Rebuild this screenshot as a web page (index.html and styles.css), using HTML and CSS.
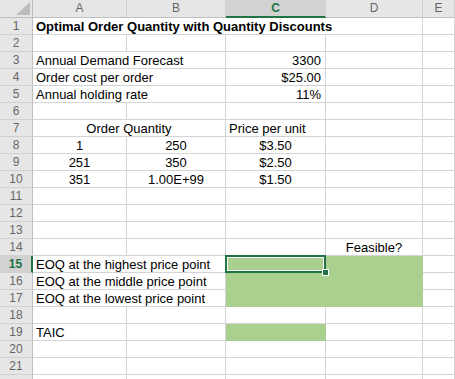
FILE: index.html
```html
<!DOCTYPE html>
<html lang="en">
<head>
    <meta charset="UTF-8">
    <title>Optimal Order Quantity</title>
    <link rel="stylesheet" href="styles.css">
</head>
<body>

    <div class="sheet">
        <!-- column headers -->
        <div class="hd corner">
            <svg width="33" height="17" viewBox="0 0 33 17"><polygon points="30,2 30,15 16,15" fill="#bdbdbd"/></svg>
        </div>
        <div class="hd">A</div>
        <div class="hd">B</div>
        <div class="hd hd-sel">C</div>
        <div class="hd">D</div>
        <div class="hd">E</div>

        <!-- row 1 -->
        <div class="rh">1</div>
        <div class="c b span4">Optimal Order Quantity with Quantity Discounts</div>
        <div class="c"></div>

        <!-- row 2 -->
        <div class="rh">2</div>
        <div class="c"></div><div class="c"></div><div class="c"></div><div class="c"></div><div class="c"></div>

        <!-- rows 3-5 inputs -->
        <div class="rh">3</div>
        <div class="c span2">Annual Demand Forecast</div>
        <div class="c r">3300</div><div class="c"></div><div class="c"></div>

        <div class="rh">4</div>
        <div class="c span2">Order cost per order</div>
        <div class="c r">$25.00</div><div class="c"></div><div class="c"></div>

        <div class="rh">5</div>
        <div class="c span2">Annual holding rate</div>
        <div class="c r">11%</div><div class="c"></div><div class="c"></div>

        <div class="rh">6</div>
        <div class="c"></div><div class="c"></div><div class="c"></div><div class="c"></div><div class="c"></div>

        <!-- price table -->
        <div class="rh">7</div>
        <div class="c span2 ctr">Order Quantity</div>
        <div class="c">Price per unit</div><div class="c"></div><div class="c"></div>

        <div class="rh">8</div>
        <div class="c ctr">1</div><div class="c ctr">250</div><div class="c ctr">$3.50</div><div class="c"></div><div class="c"></div>

        <div class="rh">9</div>
        <div class="c ctr">251</div><div class="c ctr">350</div><div class="c ctr">$2.50</div><div class="c"></div><div class="c"></div>

        <div class="rh">10</div>
        <div class="c ctr">351</div><div class="c ctr">1.00E+99</div><div class="c ctr">$1.50</div><div class="c"></div><div class="c"></div>

        <div class="rh">11</div>
        <div class="c"></div><div class="c"></div><div class="c"></div><div class="c"></div><div class="c"></div>
        <div class="rh">12</div>
        <div class="c"></div><div class="c"></div><div class="c"></div><div class="c"></div><div class="c"></div>
        <div class="rh">13</div>
        <div class="c"></div><div class="c"></div><div class="c"></div><div class="c"></div><div class="c"></div>

        <div class="rh">14</div>
        <div class="c"></div><div class="c"></div><div class="c"></div><div class="c ctr">Feasible?</div><div class="c"></div>

        <!-- EOQ results -->
        <div class="rh rh-sel">15</div>
        <div class="c span2">EOQ at the highest price point</div>
        <div class="c fill active">
            <span class="sel"></span>
            <span class="handle"></span>
        </div>
        <div class="c fill"></div><div class="c"></div>

        <div class="rh">16</div>
        <div class="c span2">EOQ at the middle price point</div>
        <div class="c fill"></div><div class="c fill"></div><div class="c"></div>

        <div class="rh">17</div>
        <div class="c span2">EOQ at the lowest price point</div>
        <div class="c fill"></div><div class="c fill"></div><div class="c"></div>

        <div class="rh">18</div>
        <div class="c"></div><div class="c"></div><div class="c"></div><div class="c"></div><div class="c"></div>

        <div class="rh">19</div>
        <div class="c">TAIC</div><div class="c"></div><div class="c fill"></div><div class="c"></div><div class="c"></div>

        <div class="rh">20</div>
        <div class="c"></div><div class="c"></div><div class="c"></div><div class="c"></div><div class="c"></div>
        <div class="rh">21</div>
        <div class="c"></div><div class="c"></div><div class="c"></div><div class="c"></div><div class="c"></div>
        <!-- row 22 is cut off by the window edge -->
        <div class="rh"></div>
        <div class="c"></div><div class="c"></div><div class="c"></div><div class="c"></div><div class="c"></div>
    </div>

</body>
</html>
```

FILE: styles.css
```css
body {
    margin: 0;
    padding: 0;
    background: #fff;
    overflow: hidden;
    font-family: "Liberation Sans", Arial, sans-serif;
}
.sheet {
    display: grid;
    grid-template-columns: 33px 94px 99px 100px 97px 1fr;
    grid-template-rows: 18px;
    grid-auto-rows: 17px;
}
.hd {
    box-sizing: border-box;
    background: #e6e6e6;
    border-right: 1px solid #d0d0d0;
    border-bottom: 1px solid #bfbfbf;
    color: #666;
    font-size: 12px;
    line-height: 17px;
    text-align: center;
}
.corner {
    border-right: 1px solid #bfbfbf;
    line-height: 0;
}
.hd-sel {
    background: #d2d2d2;
    color: #217346;
    font-weight: bold;
    border-bottom: 2px solid #217346;
}
.rh {
    box-sizing: border-box;
    background: #e6e6e6;
    border-right: 1px solid #bfbfbf;
    border-bottom: 1px solid #d0d0d0;
    color: #666;
    font-size: 12px;
    line-height: 17px;
    text-align: center;
}
.rh-sel {
    background: #d2d2d2;
    color: #217346;
    font-weight: bold;
    border-right: 2px solid #217346;
}
.c {
    box-sizing: border-box;
    border-right: 1px solid #d4d4d4;
    border-bottom: 1px solid #d4d4d4;
    color: #000;
    font-size: 13px;
    line-height: 15px;
    padding: 1px 3px 0;
    white-space: nowrap;
    overflow: visible;
}
.b {
    font-weight: bold;
}
.r {
    text-align: right;
    padding-right: 4px;
}
.ctr {
    text-align: center;
}
.span2 {
    grid-column: span 2;
}
.span4 {
    grid-column: span 4;
}
.fill {
    background: #a9d08e;
    border-color: #a9d08e;
}
.active {
    position: relative;
}
.sel {
    position: absolute;
    top: -1px;
    left: -1px;
    right: -1px;
    bottom: -1px;
    border: 2px solid #217346;
    box-shadow: inset 0 0 0 1px #fff;
}
.handle {
    position: absolute;
    right: -4px;
    bottom: -4px;
    width: 5px;
    height: 5px;
    background: #217346;
    border: 1px solid #fff;
}
```
